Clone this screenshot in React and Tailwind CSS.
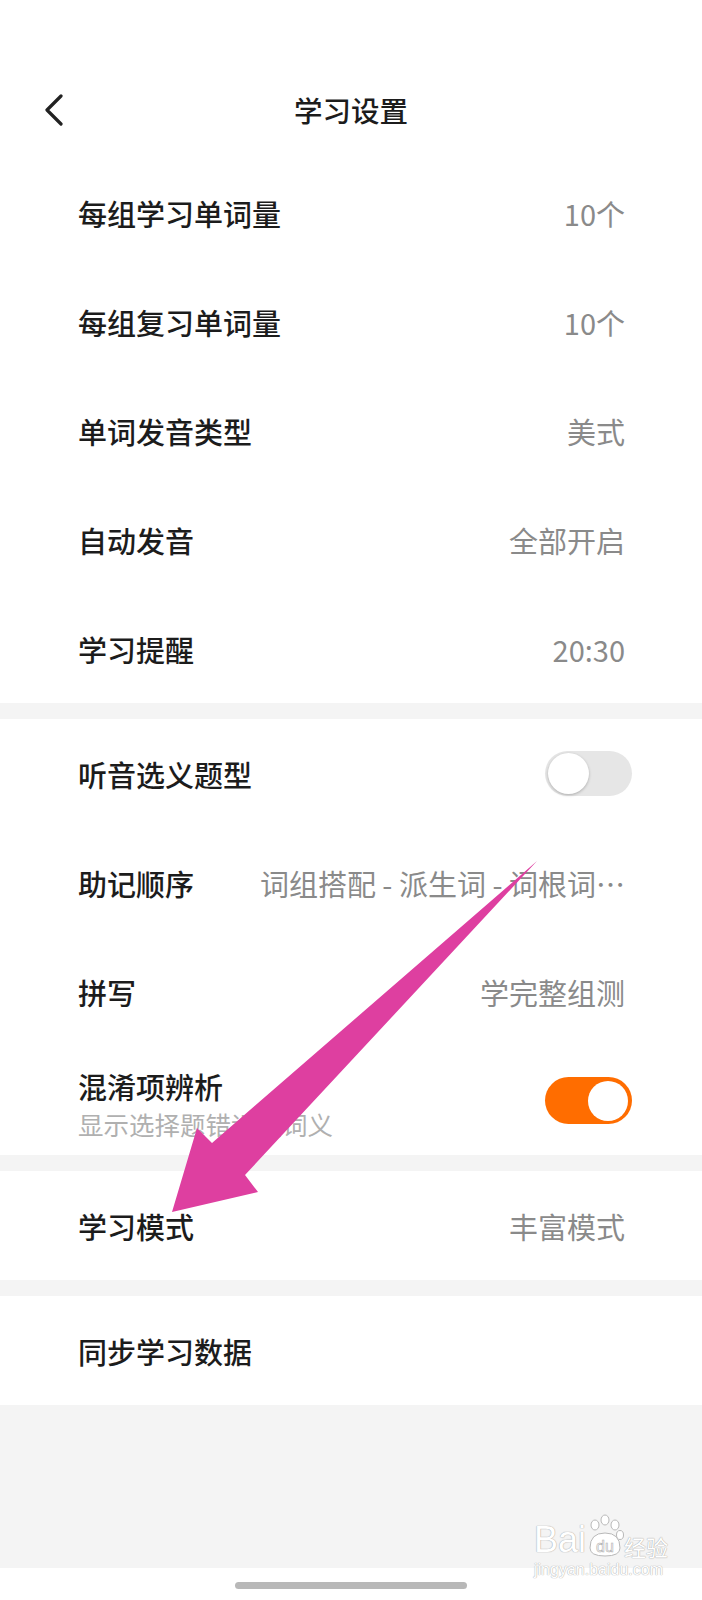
import React from "react";

const FONT = { fontFamily: '"Noto Sans CJK SC", "Noto Sans", sans-serif' };

function Toggle({ on }) {
  return on ? (
    <div className="w-[87px] h-[47px] rounded-full bg-[#ff6d00] flex items-center justify-end pr-[4px]">
      <div className="w-[40px] h-[40px] rounded-full bg-white" />
    </div>
  ) : (
    <div className="w-[87px] h-[45px] rounded-full bg-[#e6e6e6] flex items-center pl-[3px]">
      <div className="w-[41px] h-[41px] rounded-full bg-white shadow-[0_1px_3px_rgba(0,0,0,0.25)]" />
    </div>
  );
}

function Row({ label, value, right, sub }) {
  return (
    <div className="h-[109px] pl-[78px] pr-[77px] flex items-center justify-between bg-white">
      {sub ? (
        <div className="flex flex-col">
          <span className="text-[29px] leading-[46px] text-[#1c1c1c] font-medium">{label}</span>
          <span className="text-[25.5px] leading-[30px] text-[#b0b0b0]">{sub}</span>
        </div>
      ) : (
        <span className="text-[29px] leading-[40px] text-[#1c1c1c] font-medium whitespace-nowrap">{label}</span>
      )}
      {right ? (
        <div className="mr-[-7px]">{right}</div>
      ) : (
        <span className="text-[29px] leading-[40px] text-[#8a8a8a] whitespace-nowrap">{value}</span>
      )}
    </div>
  );
}

const Sep = () => <div className="h-[16px] bg-[#f4f4f4]" />;

export default function App() {
  return (
    <div className="relative w-[702px] h-[1600px] bg-white overflow-hidden" style={FONT}>
      <div className="h-[158px] pt-[66px]">
        <div className="h-[88px] grid grid-cols-[1fr_auto_1fr] items-center">
          <div className="pl-[44px] flex items-center">
            <svg width="20" height="32" viewBox="0 0 20 32" fill="none">
              <polyline points="17,2 3,16 17,30" stroke="#222" strokeWidth="3.2" strokeLinecap="round" strokeLinejoin="round" />
            </svg>
          </div>
          <span className="text-[28.5px] leading-[40px] text-[#1c1c1c] font-medium">学习设置</span>
          <div />
        </div>
      </div>

      <Row label="每组学习单词量" value="10个" />
      <Row label="每组复习单词量" value="10个" />
      <Row label="单词发音类型" value="美式" />
      <Row label="自动发音" value="全部开启" />
      <Row label="学习提醒" value="20:30" />
      <Sep />
      <Row label="听音选义题型" right={<Toggle on={false} />} />
      <Row label="助记顺序" value="词组搭配 - 派生词 - 词根词…" />
      <Row label="拼写" value="学完整组测" />
      <Row label="混淆项辨析" sub="显示选择题错误项词义" right={<Toggle on />} />
      <Sep />
      <Row label="学习模式" value="丰富模式" />
      <Sep />
      <Row label="同步学习数据" value="" />
      <div className="h-[163px] bg-[#f4f4f4]" />
      <div className="h-[32px] flex justify-center pt-[14px]">
        <div className="w-[232px] h-[7px] rounded-full bg-[#b8b8b8]" />
      </div>

      {/* annotation arrow */}
      <svg className="absolute inset-0 pointer-events-none" width="702" height="1600" viewBox="0 0 702 1600">
        <polygon points="537,861 245,1175 258,1192 172,1212 197,1128 212,1143" fill="#de3fa0" />
      </svg>

      {/* watermark */}
      <div className="absolute left-[534px] top-[1514px] flex flex-col items-start pointer-events-none">
        <div className="flex items-end">
          <span className="text-[36px] leading-[40px] text-white [text-shadow:0_0_1px_#a8a8a8,0_0_1px_#a8a8a8]" style={{ fontFamily: '"Liberation Sans", sans-serif' }}>Bai</span>
          <svg width="38" height="44" viewBox="0 0 38 44" className="mb-[2px]">
            <g fill="#fff" stroke="#b8b8b8" strokeWidth="1">
              <ellipse cx="9" cy="11" rx="4" ry="5" />
              <ellipse cx="19" cy="6" rx="4" ry="5" />
              <ellipse cx="29" cy="11" rx="4" ry="5" />
              <ellipse cx="34" cy="21" rx="3.5" ry="4.5" />
              <path d="M4 34 Q4 19 19 19 Q34 19 34 34 Q34 42 19 42 Q4 42 4 34 Z" />
            </g>
            <text x="19" y="38" textAnchor="middle" fontSize="16" fill="#fff" stroke="#b0b0b0" strokeWidth="0.6" fontFamily="Liberation Sans, sans-serif">du</text>
          </svg>
          <span className="text-[22px] leading-[28px] text-white [text-shadow:0_0_1px_#a8a8a8,0_0_1px_#a8a8a8]">经验</span>
        </div>
        <span className="text-[16px] leading-[16px] text-white [text-shadow:0_0_1px_#b0b0b0,0_0_1px_#b0b0b0] mt-[2px]" style={{ fontFamily: '"Liberation Sans", sans-serif' }}>jingyan.baidu.com</span>
      </div>
    </div>
  );
}
